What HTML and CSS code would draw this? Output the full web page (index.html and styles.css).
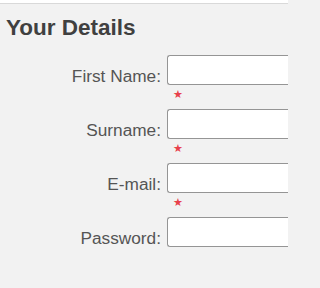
FILE: index.html
```html
<!DOCTYPE html>
<html>
<head>
<meta charset="utf-8">
<link rel="stylesheet" href="styles.css">
</head>
<body>
<div class="topbar"></div>
<section class="panel">
  <h2 class="title">Your Details</h2>
  <form class="form">
    <div class="row">
      <label class="label" for="fn">First Name:</label>
      <div class="field">
        <input class="input" id="fn" type="text">
        <span class="req">★</span>
      </div>
    </div>
    <div class="row">
      <label class="label" for="sn">Surname:</label>
      <div class="field">
        <input class="input" id="sn" type="text">
        <span class="req">★</span>
      </div>
    </div>
    <div class="row">
      <label class="label" for="em">E-mail:</label>
      <div class="field">
        <input class="input" id="em" type="text">
        <span class="req">★</span>
      </div>
    </div>
    <div class="row">
      <label class="label" for="pw">Password:</label>
      <div class="field">
        <input class="input" id="pw" type="password">
      </div>
    </div>
  </form>
</section>
</body>
</html>
```
FILE: styles.css
```css
html, body {
  margin: 0;
  padding: 0;
  width: 288px;
  height: 288px;
  background: #f2f2f2;
  font-family: "Liberation Sans", Arial, sans-serif;
  overflow: hidden;
}
.topbar {
  height: 3px;
  background: #ffffff;
  border-bottom: 1px solid #d9d9d9;
}
.panel {
  padding: 0 0 0 6px;
  overflow: hidden;
}
.title {
  margin: 11px 0 0 0;
  font-size: 22.5px;
  font-weight: bold;
  color: #404040;
  line-height: 26px;
}
.form {
  margin-top: 14px;
  display: flex;
  flex-direction: column;
}
.row {
  display: grid;
  grid-template-columns: 155px 1fr;
  column-gap: 6px;
  align-items: start;
}
.label {
  text-align: right;
  font-size: 17.25px;
  color: #555555;
  line-height: 20px;
  padding-top: 11px;
}
.field {
  display: flex;
  flex-direction: column;
  align-items: stretch;
}
.input {
  box-sizing: border-box;
  width: 100%;
  height: 30px;
  margin: 0;
  border: 1px solid #959595;
  border-right: none;
  border-radius: 3px 0 0 3px;
  background: #ffffff;
  padding: 0 4px;
  outline: none;
}
.req {
  height: 24px;
  line-height: 18px;
  margin-left: 6px;
  font-size: 11px;
  color: #e8414b;
}
```
